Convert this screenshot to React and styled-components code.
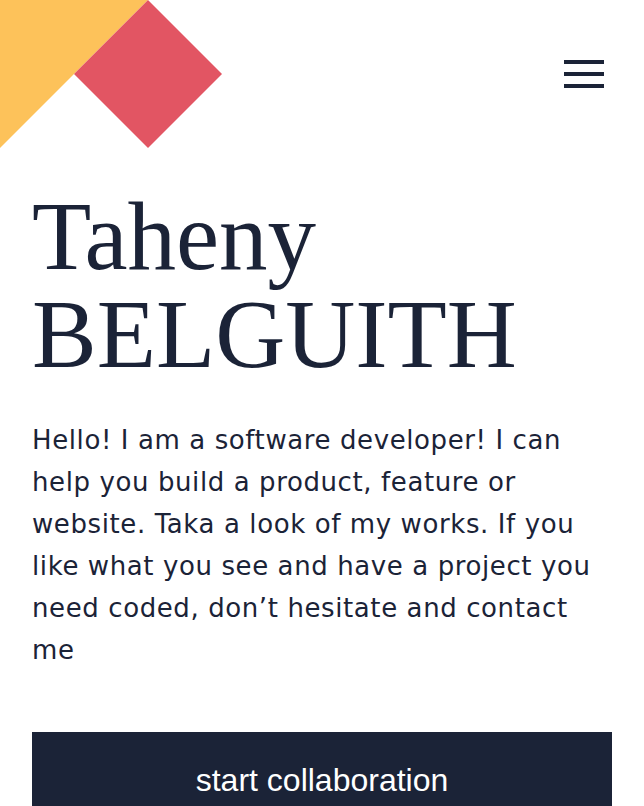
import React from 'react';
import styled, { createGlobalStyle } from 'styled-components';

const GlobalStyle = createGlobalStyle`
    body {
        margin: 0;
        background: #ffffff;
        font-family: "DejaVu Sans", sans-serif;
    }
`;

const Page = styled.div`
    min-height: 806px;
    overflow: hidden;
`;

const Header = styled.header`
    display: flex;
    justify-content: space-between;
    align-items: flex-start;
    height: 148px;
`;

const Burger = styled.button`
    display: flex;
    flex-direction: column;
    gap: 8px;
    margin: 60px 40px 0 0;
    padding: 0;
    border: none;
    background: none;
    cursor: pointer;
    span {
        display: block;
        width: 40px;
        height: 4px;
        background-color: #1b2337;
    }
`;

const Hero = styled.main`
    padding: 40px 32px 0;
`;

const Name = styled.h1`
    margin: 0;
    font-family: "Liberation Serif", "DejaVu Serif", serif;
    font-weight: 400;
    font-size: 97px;
    line-height: 98px;
    color: #1b2337;
    span {
        display: block;
    }
`;

const Intro = styled.p`
    margin: 35px 0 0;
    font-size: 26px;
    letter-spacing: 0.6px;
    line-height: 42px;
    color: #1b2337;
`;

const Collab = styled.button`
    display: block;
    width: 100%;
    margin-top: 61px;
    padding: 30px 0 40px;
    border: none;
    background-color: #1b2337;
    color: #ffffff;
    font-family: "Liberation Sans", Arial, sans-serif;
    font-size: 32px;
    cursor: pointer;
`;

const Logo = () => (
    <svg width="222" height="148" viewBox="0 0 222 148">
        <polygon points="0,0 148,0 0,148" fill="#fdc25a" />
        <polygon points="148,0 222,74 148,148 74,74" fill="#e25563" />
    </svg>
);

const App = () => {
    return (
        <>
        <GlobalStyle />
        <Page>
            <Header>
                <Logo />
                <Burger aria-label="menu">
                    <span />
                    <span />
                    <span />
                </Burger>
            </Header>
            <Hero>
                <Name>
                    <span>Taheny</span>
                    <span>BELGUITH</span>
                </Name>
                <Intro>
                    Hello! I am a software developer! I can help you build a product, feature or website.
                    Taka a look of my works. If you like what you see and have a project you need coded,
                    don’t hesitate and contact me
                </Intro>
                <Collab>start collaboration</Collab>
            </Hero>
        </Page>
        </>
    );
};

export default App;
